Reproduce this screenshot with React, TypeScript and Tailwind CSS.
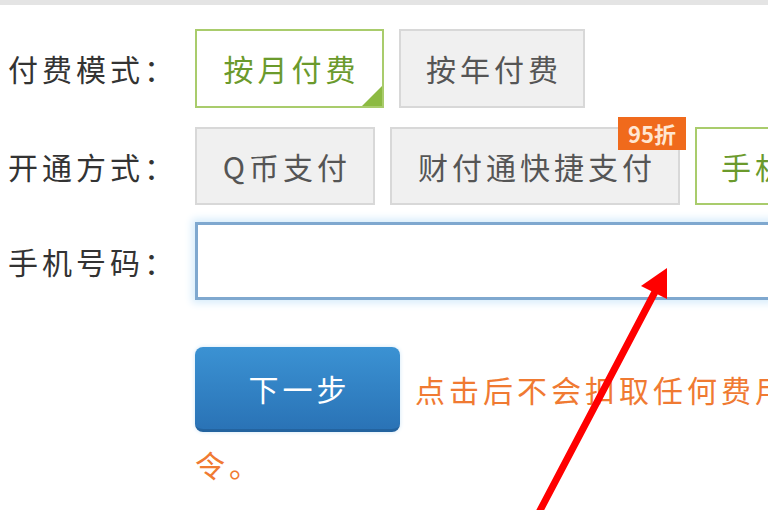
export default function App() {
  const font = { fontFamily: '"Noto Sans CJK SC", "Noto Sans", sans-serif' }

  return (
    <div style={font} className="relative h-[510px] w-[768px] overflow-hidden bg-white text-[30px] tracking-[4px]">
      <div className="h-[5px] bg-[#e4e4e4]" />

      <div className="flex flex-col pt-[24px]">
        {/* 付费模式 */}
        <div className="flex items-center whitespace-nowrap">
          <div className="w-[195px] shrink-0 pl-[8px] text-[#333]">付费模式：</div>
          <div className="flex gap-[15px]">
            <div className="relative flex h-[79px] w-[189px] items-center justify-center border-2 border-[#a9cc6c] bg-white pl-[4px] text-[#6b9a2c]">
              按月付费
              <svg className="absolute bottom-0 right-0" width="20" height="20" viewBox="0 0 20 20">
                <polygon points="20,0 20,20 0,20" fill="#8cba42" />
              </svg>
            </div>
            <div className="flex h-[79px] w-[186px] items-center justify-center border-2 border-[#d8d8d8] bg-[#f0f0f0] pl-[4px] text-[#555]">
              按年付费
            </div>
          </div>
        </div>

        {/* 开通方式 */}
        <div className="mt-[19px] flex items-center whitespace-nowrap">
          <div className="w-[195px] shrink-0 pl-[8px] text-[#333]">开通方式：</div>
          <div className="flex gap-[15px]">
            <div className="flex h-[78px] w-[180px] items-center justify-center border-2 border-[#d8d8d8] bg-[#f0f0f0] pl-[4px] text-[#555]">
              Q币支付
            </div>
            <div className="relative flex h-[78px] w-[290px] items-center justify-center border-2 border-[#d8d8d8] bg-[#f0f0f0] pl-[4px] text-[#555]">
              财付通快捷支付
              <span className="absolute right-[-8px] top-[-12px] flex h-[33px] w-[68px] items-center justify-center bg-[#f06a1c] text-[22px] font-bold tracking-[0px] text-[#ffe6d2]">
                95折
              </span>
            </div>
            <div className="flex h-[78px] w-[240px] shrink-0 items-center border-2 border-[#a9cc6c] bg-white pl-[24px] text-[#6b9a2c]">
              手机话费支付
            </div>
          </div>
        </div>

        {/* 手机号码 */}
        <div className="mt-[17px] flex items-center whitespace-nowrap">
          <div className="w-[195px] shrink-0 pl-[8px] text-[#333]">手机号码：</div>
          <div className="h-[78px] w-[620px] shrink-0 border-[3px] border-[#7fa8cf] bg-white shadow-[0_0_8px_3px_#d6ecfb]" />
        </div>

        {/* 下一步 */}
        <div className="ml-[195px] mt-[47px] flex items-center gap-[15px] whitespace-nowrap">
          <button className="h-[85px] w-[205px] shrink-0 rounded-[8px] border-b-[3px] border-[#23639f] bg-gradient-to-b from-[#3b92d3] to-[#2a73b6] pl-[4px] text-[30px] text-white shadow-[0_0_4px_#cfe6f7]">
            下一步
          </button>
          <span className="text-[#f07a32]">点击后不会扣取任何费用，需要您回复短信确认指</span>
        </div>
        <div className="ml-[195px] mt-[10px] text-[#f07a32]">令。</div>
      </div>

      {/* red annotation arrow */}
      <svg className="pointer-events-none absolute left-0 top-0" width="768" height="510" viewBox="0 0 768 510">
        <line x1="535" y1="520" x2="656" y2="290" stroke="#f00" strokeWidth="7" strokeLinecap="round" />
        <polygon points="667,268 641,286 667,299" fill="#f00" />
      </svg>
    </div>
  )
}
